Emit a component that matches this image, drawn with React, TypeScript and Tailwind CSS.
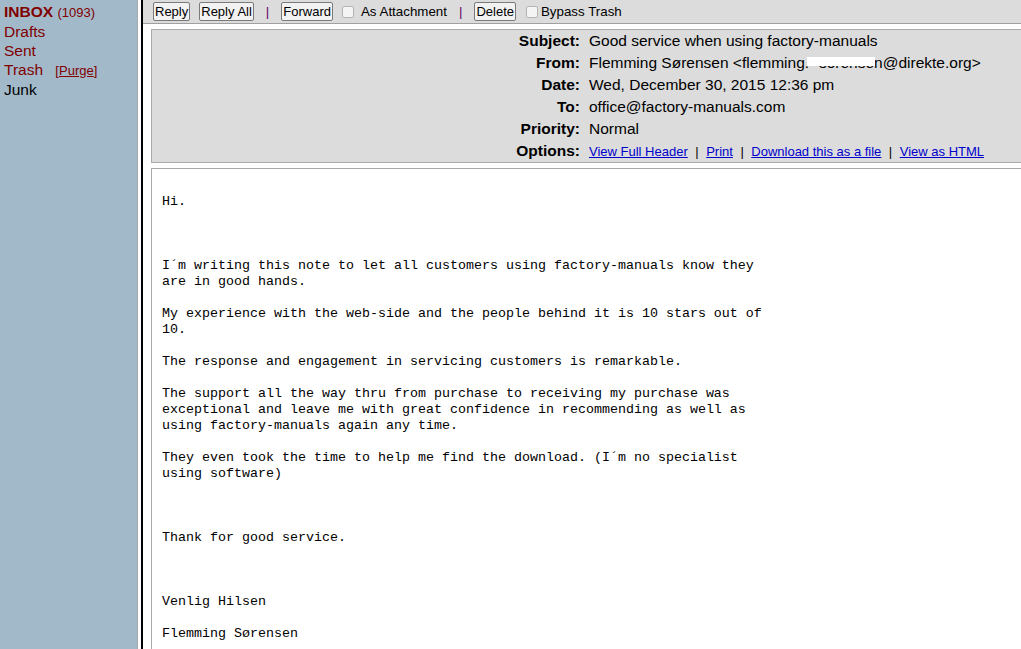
import React from 'react';

const body = `Hi.



I´m writing this note to let all customers using factory-manuals know they
are in good hands.

My experience with the web-side and the people behind it is 10 stars out of
10.

The response and engagement in servicing customers is remarkable.

The support all the way thru from purchase to receiving my purchase was
exceptional and leave me with great confidence in recommending as well as
using factory-manuals again any time.

They even took the time to help me find the download. (I´m no specialist
using software)



Thank for good service.



Venlig Hilsen

Flemming Sørensen`;

const Checkbox = () => (
  <span className="inline-block w-[12px] h-[12px] rounded-[2px] border border-[#b4b4b4] bg-[#f4f4f4]" />
);

const Btn = ({ label, className = '' }: { label: string; className?: string }) => (
  <button className={`h-[19px] px-[1px] border border-[#7a7a7a] rounded-[2px] bg-[#f2f2f2] text-black text-[13px] leading-[17px] ${className}`}>{label}</button>
);

const Row = ({ label, children }: { label: string; children: React.ReactNode }) => (
  <div className="flex h-[22px] items-center">
    <div className="w-[428px] text-right font-bold">{label}</div>
    <div className="pl-[9px] whitespace-nowrap">{children}</div>
  </div>
);

export default function App() {
  return (
    <div className="flex w-[1021px] h-[649px] overflow-hidden bg-white text-black font-['Liberation_Sans',Arial,sans-serif]">
      {/* Folder list */}
      <aside className="w-[138px] shrink-0 bg-[#a2b9ca] border-r border-[#aaaaaa] pt-[2px] pl-[4px] text-[15.5px] leading-[19px]">
        <div>
          <span className="font-bold text-[#800000]">INBOX</span> <span className="text-[13px] text-[#800000]">(1093)</span>
        </div>
        <div className="text-[#800000]">Drafts</div>
        <div className="text-[#800000]">Sent</div>
        <div className="text-[#800000]">
          Trash <span className="ml-[8px] text-[13px]">[<span className="underline">Purge</span>]</span>
        </div>
        <div>Junk</div>
      </aside>
      <div className="w-[3px] shrink-0 bg-white" />

      {/* Message pane */}
      <main className="flex-1 min-w-0 border-l-2 border-black">
        <div className="h-[24px] bg-[#dcdcdc] border-b border-[#a0a0a0] flex items-center pl-[10px] text-[13.33px]">
          <Btn label="Reply" />
          <Btn label="Reply All" className="ml-[9px]" />
          <span className="ml-[12px] text-[#660066]">|</span>
          <Btn label="Forward" className="ml-[12px]" />
          <span className="ml-[9px] flex"><Checkbox /></span>
          <span className="ml-[7px]">As Attachment</span>
          <span className="ml-[12px] text-[#660066]">|</span>
          <Btn label="Delete" className="ml-[12px]" />
          <span className="ml-[10px] flex"><Checkbox /></span>
          <span className="ml-[3px]">Bypass Trash</span>
        </div>

        <div className="ml-[8px] mt-[5px] bg-[#dcdcdc] border border-[#aaaaaa] border-r-0 text-[15.5px]">
          <Row label="Subject:">Good service when using factory-manuals</Row>
          <Row label="From:">
            Flemming Sørensen &lt;flemming.
            <span className="relative inline-block w-[65px] text-right">
              sorense
              <span className="absolute left-[-2px] right-[-1px] top-[6px] h-[9px] bg-white" />
            </span>
            n@direkte.org&gt;
          </Row>
          <Row label="Date:">Wed, December 30, 2015 12:36 pm</Row>
          <Row label="To:">office@factory-manuals.com</Row>
          <Row label="Priority:">Normal</Row>
          <Row label="Options:">
            <span className="text-[13px]">
              <a className="text-[#0000cc] underline">View Full Header</a>
              <span className="mx-[7.5px]">|</span>
              <a className="text-[#0000cc] underline">Print</a>
              <span className="mx-[7.5px]">|</span>
              <a className="text-[#0000cc] underline">Download this as a file</a>
              <span className="mx-[7.5px]">|</span>
              <a className="text-[#0000cc] underline">View as HTML</a>
            </span>
          </Row>
        </div>

        <div className="ml-[8px] mt-[5px] h-[600px] border border-[#aaaaaa] border-r-0 pt-[25px] pl-[10px]">
          <pre className="font-['Liberation_Mono','Courier_New',monospace] text-[13.33px] leading-[16px] whitespace-pre">{body}</pre>
        </div>
      </main>
    </div>
  );
}
